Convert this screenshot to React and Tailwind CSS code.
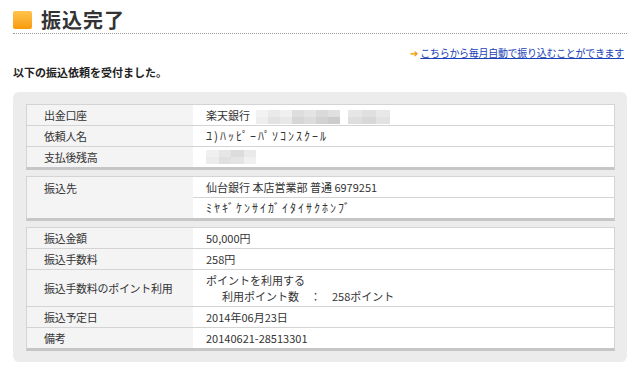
import React from "react";

const font = { fontFamily: '"Noto Sans CJK JP", "Noto Sans", sans-serif' };

function Blur({ w, top, bottom }) {
  return (
    <span className="inline-flex flex-col h-[14px] align-middle" style={{ width: w }}>
      <span className="flex flex-1">
        {top.map((c, i) => (
          <span key={i} className="h-full flex-1" style={{ background: c }} />
        ))}
      </span>
      <span className="flex flex-1">
        {bottom.map((c, i) => (
          <span key={i} className="h-full flex-1" style={{ background: c }} />
        ))}
      </span>
    </span>
  );
}

function Row({ label, children, last, tall }) {
  return (
    <div className={`flex ${last ? "" : "border-b border-[#d4d4d4]"}`}>
      <div className="w-[166px] shrink-0 bg-[#f4f4f4] pl-[17px] flex items-center tracking-[-0.3px]">{label}</div>
      <div className={`flex-1 bg-white pl-[13px] ${tall ? "py-[2px] leading-[16px]" : "h-[20px] flex items-center"}`}>
        {children}
      </div>
    </div>
  );
}

function Table({ children }) {
  return (
    <div className="border border-[#d4d4d4] border-b-[3px] border-b-[#c6c6c6] text-[11px] text-[#333]">
      {children}
    </div>
  );
}

const kana = "text-[12px] tracking-[2px]";

export default function App() {
  return (
    <div className="w-[640px] h-[372px] bg-white px-[13px] pt-[10px]" style={font}>
      <div className="flex items-center h-[19px]">
        <div className="w-[19px] h-[18px] rounded-[2px] bg-gradient-to-b from-[#ffc54a] to-[#f79a00]" />
        <div className="ml-[9px] text-[20px] font-bold text-[#333] leading-none tracking-[1px]">振込完了</div>
      </div>
      <div className="mt-[4px] border-b border-dotted border-[#999]" />
      <div className="mt-[14px] pr-[3px] flex justify-end items-center text-[10px] leading-none">
        <span className="text-[#f39800] text-[10px] mr-[2px]">➔</span>
        <span className="text-[#1a3fb8] underline tracking-[-0.3px]">こちらから毎月自動で振り込むことができます</span>
      </div>
      <div className="mt-[9px] text-[11px] font-bold text-[#222] leading-none">以下の振込依頼を受付ました。</div>
      <div className="mt-[14px] bg-[#ececec] rounded-[6px] pl-[13px] pr-[12px] pt-[12px] pb-[11px] flex flex-col gap-[6px]">
        <Table>
          <Row label="出金口座">
            <span>楽天銀行</span>
            <span className="ml-[6px]">
              <Blur
                w={84}
                top={["#f2f2f2", "#eaeaea", "#f0f0f0", "#dedede", "#e4e4e4", "#dadada", "#e0e0e0"]}
                bottom={["#eeeeee", "#e2e2e2", "#e8e8e8", "#d6d6d6", "#dcdcdc", "#d2d2d2", "#cccccc"]}
              />
            </span>
            <span className="ml-[8px]">
              <Blur w={42} top={["#e6e6e6", "#e0e0e0", "#e8e8e8"]} bottom={["#dedede", "#d8d8d8", "#e2e2e2"]} />
            </span>
          </Row>
          <Row label="依頼人名">
            <span className={kana}>ﾕ)ﾊｯﾋﾟｰﾊﾟｿｺﾝｽｸｰﾙ</span>
          </Row>
          <Row label="支払後残高" last>
            <Blur w={50} top={["#f0f0f0", "#e6e6e6", "#dcdcdc", "#eaeaea"]} bottom={["#ececec", "#e0e0e0", "#e4e4e4", "#f0f0f0"]} />
          </Row>
        </Table>
        <Table>
          <div className="flex">
            <div className="w-[166px] shrink-0 bg-[#f4f4f4] pl-[17px] pt-[3px]">振込先</div>
            <div className="flex-1 bg-white">
              <div className="h-[21px] pl-[13px] flex items-center border-b border-[#d4d4d4]">仙台銀行 本店営業部 普通 6979251</div>
              <div className="h-[20px] pl-[13px] flex items-center">
                <span className={kana}>ﾐﾔｷﾞｹﾝｻｲｶﾞｲﾀｲｻｸﾎﾝﾌﾞ</span>
              </div>
            </div>
          </div>
        </Table>
        <Table>
          <Row label="振込金額">50,000円</Row>
          <Row label="振込手数料">258円</Row>
          <Row label="振込手数料のポイント利用" tall>
            <div>ポイントを利用する</div>
            <div className="pl-[16px]">利用ポイント数　：　258ポイント</div>
          </Row>
          <Row label="振込予定日">2014年06月23日</Row>
          <Row label="備考" last>20140621-28513301</Row>
        </Table>
      </div>
    </div>
  );
}
